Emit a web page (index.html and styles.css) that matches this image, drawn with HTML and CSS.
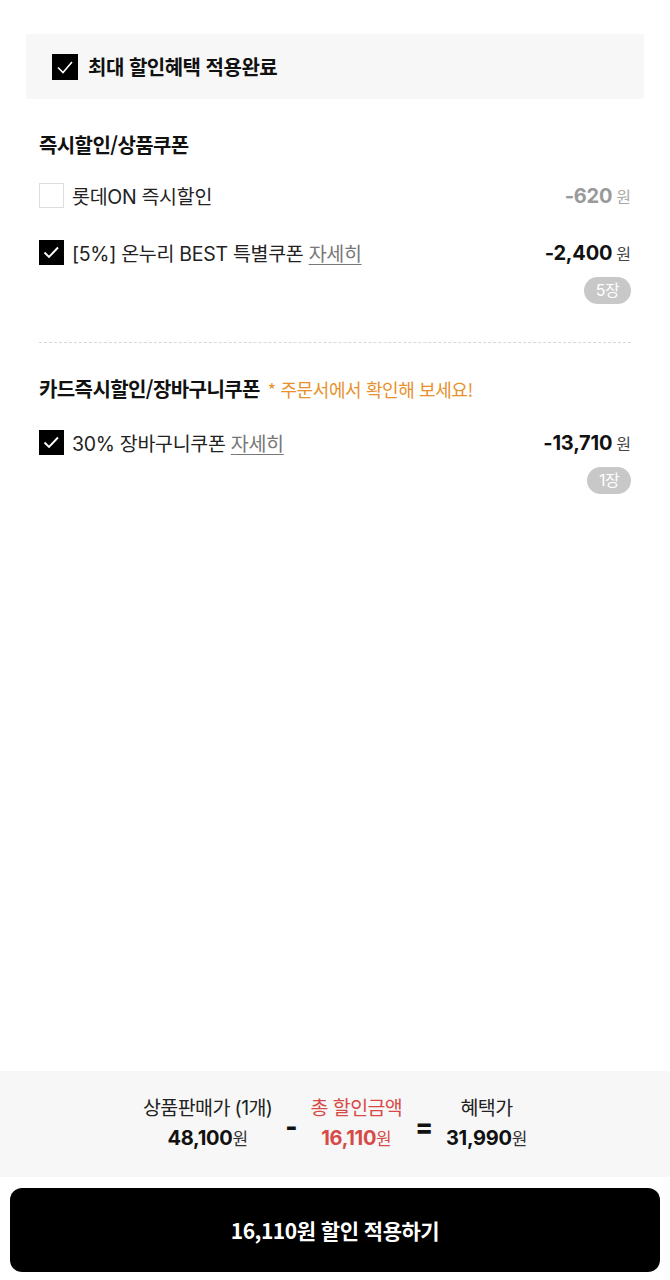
FILE: index.html
```html
<!DOCTYPE html>
<html lang="ko">
<head>
<meta charset="utf-8">
<link rel="stylesheet" href="styles.css">
</head>
<body>
<div class="page">
  <main class="main">
    <div class="max-box">
      <span class="cb cb-lg checked"><svg viewBox="0 0 26 26"><path d="M6 13.5l5 5 9-10.5" fill="none" stroke="#fff" stroke-width="1.6"/></svg></span>
      <span class="max-text">최대 할인혜택 적용완료</span>
    </div>

    <section class="sec sec1">
      <h2 class="sec-title">즉시할인/상품쿠폰</h2>
      <div class="row row-first">
        <span class="cb"></span>
        <span class="label">롯데ON 즉시할인</span>
        <span class="amt muted"><b>-620</b><i>원</i></span>
      </div>
      <div class="row row-second">
        <span class="cb checked"><svg viewBox="0 0 25 25"><path d="M5.5 12.5l4.5 4.5 9-9.5" fill="none" stroke="#fff" stroke-width="1.9"/></svg></span>
        <span class="label">[5%] 온누리 BEST 특별쿠폰 <u class="more">자세히</u></span>
        <span class="amt"><b>-2,400</b><i>원</i></span>
      </div>
      <div class="badge-row"><span class="badge">5장</span></div>
    </section>

    <hr class="dash">

    <section class="sec sec2">
      <h2 class="sec-title">카드즉시할인/장바구니쿠폰 <span class="note">* 주문서에서 확인해 보세요!</span></h2>
      <div class="row row-first2">
        <span class="cb checked"><svg viewBox="0 0 25 25"><path d="M5.5 12.5l4.5 4.5 9-9.5" fill="none" stroke="#fff" stroke-width="1.9"/></svg></span>
        <span class="label">30% 장바구니쿠폰 <u class="more">자세히</u></span>
        <span class="amt"><b>-13,710</b><i>원</i></span>
      </div>
      <div class="badge-row"><span class="badge">1장</span></div>
    </section>
  </main>

  <footer class="footer">
    <div class="summary">
      <div class="col">
        <div class="s-label">상품판매가 (1개)</div>
        <div class="s-val">48,100<i>원</i></div>
      </div>
      <div class="op">-</div>
      <div class="col red">
        <div class="s-label">총 할인금액</div>
        <div class="s-val">16,110<i>원</i></div>
      </div>
      <div class="op">=</div>
      <div class="col">
        <div class="s-label">혜택가</div>
        <div class="s-val">31,990<i>원</i></div>
      </div>
    </div>
    <div class="btn-wrap">
      <button class="apply">16,110원 할인 적용하기</button>
    </div>
  </footer>
</div>
</body>
</html>
```
FILE: styles.css
```css
* { box-sizing: border-box; }
html, body { margin: 0; padding: 0; background: #fff; }
body {
  font-family: "Inter", "Noto Sans CJK KR", sans-serif;
  color: #111;
}
.page {
  min-height: 1280px;
  display: flex;
  flex-direction: column;
}
.main { flex: 1; }

.max-box {
  margin: 34px 26px 0;
  height: 65px;
  background: #f7f7f7;
  display: flex;
  align-items: center;
  padding-left: 26px;
  gap: 10px;
}
.max-text {
  font-family: "Noto Sans CJK KR", sans-serif;
  font-weight: 700;
  font-size: 20px;
  letter-spacing: -0.5px;
  color: #111;
}

.cb {
  width: 25px;
  height: 25px;
  flex: 0 0 25px;
  border: 1px solid #ddd;
  background: #fff;
  display: block;
}
.cb.checked { background: #000; border-color: #000; }
.cb svg { display: block; width: 100%; height: 100%; }
.cb-lg { width: 26px; height: 26px; flex-basis: 26px; }
.cb.checked svg { margin: -1px; width: calc(100% + 2px); height: calc(100% + 2px); }

.sec { padding: 0 39px; }
.sec-title {
  margin: 0;
  font-family: "Noto Sans CJK KR", sans-serif;
  font-weight: 700;
  font-size: 20px;
  line-height: 26px;
  letter-spacing: -0.6px;
  color: #111;
}
.sec1 .sec-title { margin-top: 33px; }
.note {
  font-weight: 400;
  font-size: 18px;
  color: #e8912c;
  letter-spacing: -0.4px;
  margin-left: 3px;
}

.row {
  display: flex;
  align-items: center;
  height: 25px;
}
.row-first { margin-top: 25px; }
.row-second { margin-top: 32px; }
.row-first2 { margin-top: 28px; }
.label {
  flex: 1;
  margin-left: 8px;
  font-size: 19.5px;
  letter-spacing: -0.3px;
  color: #222;
  white-space: nowrap;
}
.more { color: #777; text-decoration: underline; text-underline-offset: 3px; text-decoration-thickness: 1px; }
.amt {
  display: flex;
  align-items: baseline;
  gap: 4px;
  color: #111;
}
.amt b { font-weight: 700; font-size: 20px; letter-spacing: -0.2px; }
.amt i { font-style: normal; font-size: 16px; color: #444; font-family: "Noto Sans CJK KR", sans-serif; }
.amt.muted b { color: #9a9a9a; }
.amt.muted i { color: #aaa; }

.badge-row {
  display: flex;
  justify-content: flex-end;
  margin-top: 12px;
}
.badge {
  height: 27px;
  padding: 0 12px;
  border-radius: 14px;
  background: #c8c8c8;
  color: #fff;
  font-size: 16px;
  line-height: 27px;
  letter-spacing: -0.6px;
}

.dash {
  margin: 38px 39px 0;
  border: 0;
  border-top: 1px dashed #d8d8d8;
  height: 0;
}
.sec2 .sec-title { margin-top: 33px; }

.footer { display: flex; flex-direction: column; }
.summary {
  background: #f7f7f7;
  height: 106px;
  display: flex;
  justify-content: center;
  align-items: center;
  gap: 13px;
  padding-left: 0;
}
.col { text-align: center; }
.s-label {
  font-size: 19.5px;
  line-height: 28px;
  letter-spacing: -0.6px;
  color: #222;
}
.s-val {
  font-size: 20px;
  font-weight: 700;
  line-height: 31px;
  letter-spacing: -0.3px;
  color: #111;
}
.s-val i {
  font-style: normal;
  font-weight: 400;
  font-size: 17px;
  font-family: "Noto Sans CJK KR", sans-serif;
  color: #333;
}
.red .s-label, .red .s-val, .red .s-val i { color: #d64a48; }
.op {
  font-size: 26px;
  font-weight: 800;
  color: #111;
  padding-top: 4px;
}
.btn-wrap { padding: 11px 10px 8px; }
.apply {
  width: 100%;
  height: 84px;
  border: 0;
  border-radius: 12px;
  background: #000;
  color: #fff;
  font-family: "Noto Sans CJK KR", sans-serif;
  font-weight: 700;
  font-size: 21px;
  letter-spacing: -0.5px;
  display: block;
}
```
